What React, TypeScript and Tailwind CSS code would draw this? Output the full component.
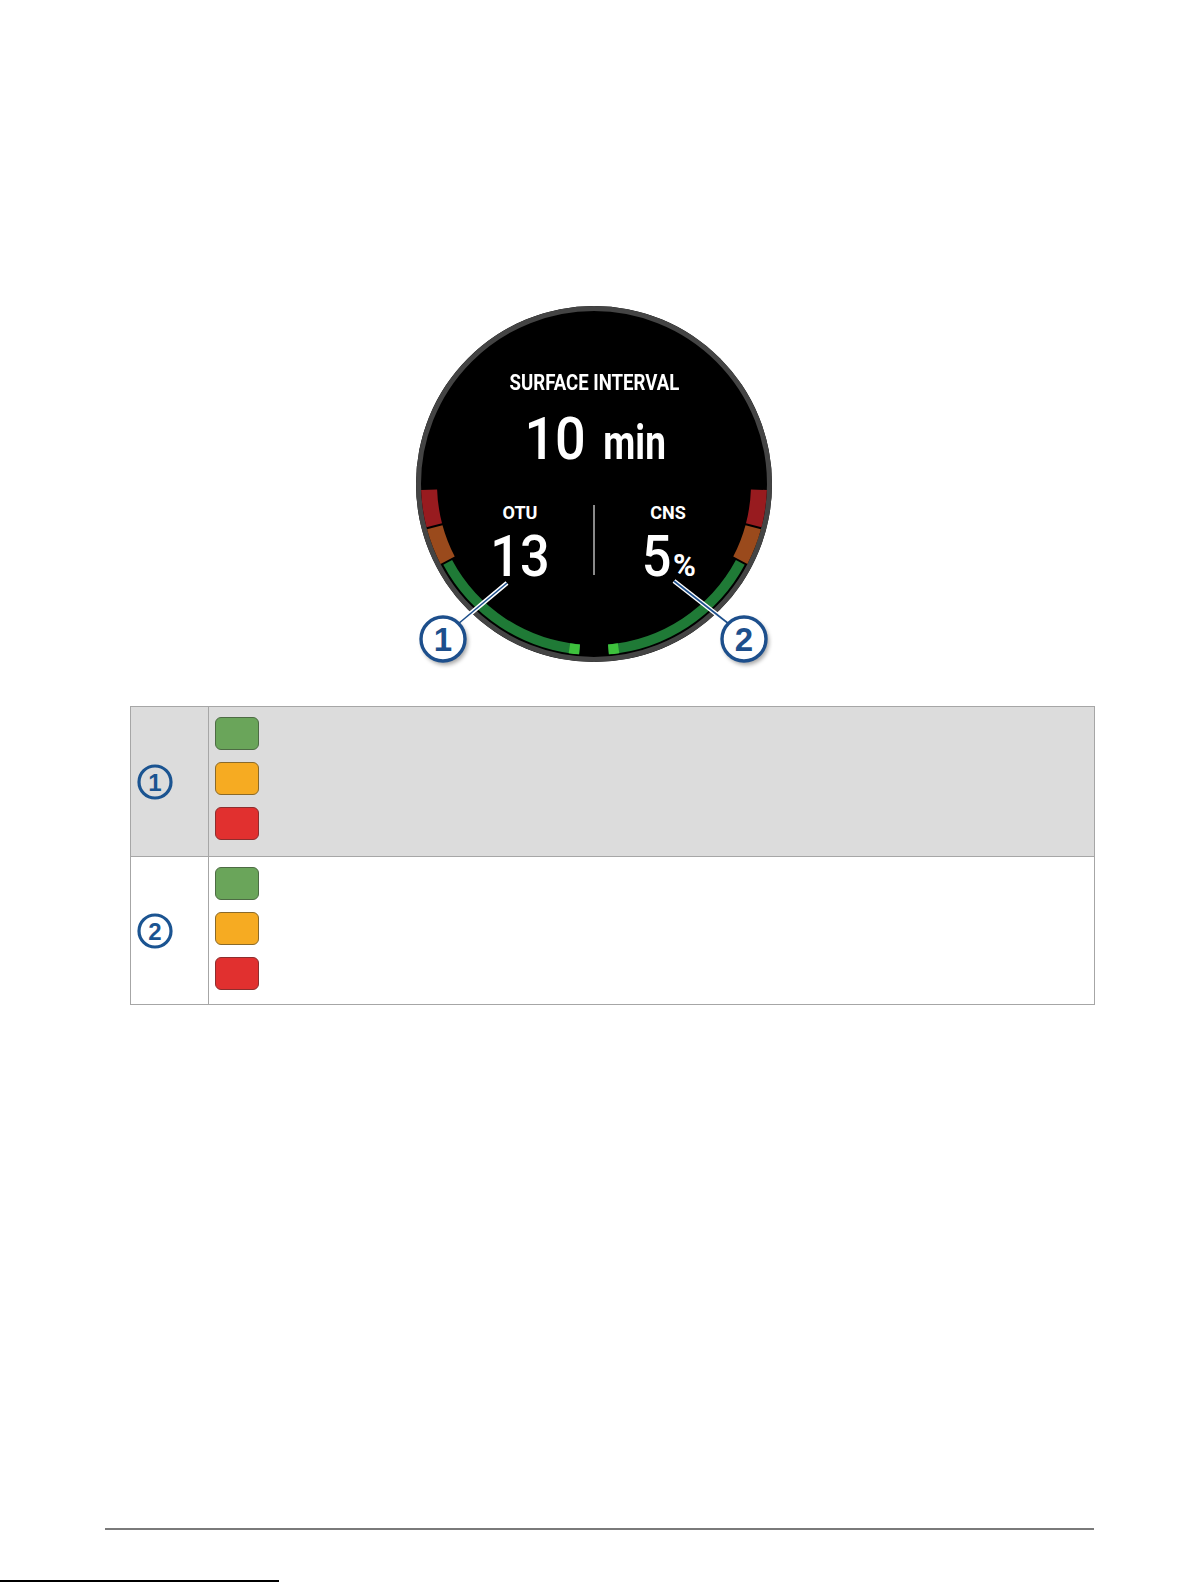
import React from "react";

const C = 178;

function pt(r: number, a: number) {
  const t = (a * Math.PI) / 180;
  return `${(C + r * Math.cos(t)).toFixed(2)} ${(C + r * Math.sin(t)).toFixed(2)}`;
}

function arc(r: number, a1: number, a2: number) {
  return `M ${pt(r, a1)} A ${r} ${r} 0 0 1 ${pt(r, a2)}`;
}

// gauge segments, angles in degrees (0 = right, clockwise)
const segments = [
  { r: 165, w: 16, a1: 165.5, a2: 178, color: "#981b1f" },
  { r: 165, w: 16, a1: 152.5, a2: 164.8, color: "#9a4a1c" },
  { r: 166, w: 10, a1: 95, a2: 151.8, color: "#1f7a36" },
  { r: 166, w: 10, a1: 95, a2: 98.5, color: "#3ec13d" },
  { r: 165, w: 16, a1: 2, a2: 14.5, color: "#981b1f" },
  { r: 165, w: 16, a1: 15.2, a2: 27.5, color: "#9a4a1c" },
  { r: 166, w: 10, a1: 28.2, a2: 85, color: "#1f7a36" },
  { r: 166, w: 10, a1: 81.5, a2: 85, color: "#3ec13d" },
];

function Callout({ x, y, n }: { x: number; y: number; n: string }) {
  return (
    <g>
      <circle cx={x + 2} cy={y + 3} r={23} fill="#000" opacity={0.35} filter="url(#soft)" />
      <circle cx={x} cy={y} r={22} fill="#fff" stroke="#1d4f8c" strokeWidth={3.4} />
      <text
        x={x}
        y={y + 12}
        textAnchor="middle"
        fontFamily="'Liberation Sans', Arial, sans-serif"
        fontWeight={700}
        fontSize={33}
        fill="#1d4f8c"
      >
        {n}
      </text>
    </g>
  );
}

function Leader({ x1, y1, x2, y2 }: { x1: number; y1: number; x2: number; y2: number }) {
  return (
    <g>
      <line x1={x1} y1={y1} x2={x2} y2={y2} stroke="#ffffff" strokeWidth={4.5} />
      <line x1={x1} y1={y1} x2={x2} y2={y2} stroke="#1d4f8c" strokeWidth={1.6} />
    </g>
  );
}

function Watch() {
  return (
    <div className="relative w-[356px] h-[356px] rounded-full bg-black">
      <svg className="absolute inset-0 overflow-visible" width="356" height="356" viewBox="0 0 356 356">
        <defs>
          <filter id="soft" x="-50%" y="-50%" width="200%" height="200%">
            <feGaussianBlur stdDeviation="2" />
          </filter>
        </defs>
        <circle cx={C} cy={C} r={175.5} fill="none" stroke="#444444" strokeWidth={5} />
        {segments.map((s, i) => (
          <path key={i} d={arc(s.r, s.a1, s.a2)} fill="none" stroke={s.color} strokeWidth={s.w} />
        ))}
        <Leader x1={91} y1={277} x2={42} y2={318} />
        <Leader x1={258} y1={275} x2={313} y2={318} />
        <Callout x={27} y={333} n="1" />
        <Callout x={328} y={333} n="2" />
      </svg>

      <div className="relative flex flex-col items-center pt-[66px] text-white font-['Roboto',sans-serif]">
        <div className="inline-block font-bold text-[22px] leading-none whitespace-nowrap scale-x-[0.845]">
          SURFACE INTERVAL
        </div>
        <div className="mt-[15px] pl-[8px] flex items-baseline text-[60px] leading-none whitespace-nowrap">
          <span className="inline-block font-medium scale-x-[0.9]">10</span>
          <span className="inline-block ml-[5px] font-bold text-[48px] scale-x-[0.77]">min</span>
        </div>
        <div className="mt-[35px] flex justify-center">
          <div className="w-[146px] flex flex-col items-center">
            <div className="inline-block font-bold text-[18px] leading-none">OTU</div>
            <div className="inline-block mt-[5px] font-medium text-[58px] leading-none scale-x-[0.9]">13</div>
          </div>
          <div className="mt-[1px] w-[2px] h-[70px] bg-[#8a8a8a]" />
          <div className="w-[146px] flex flex-col items-center">
            <div className="inline-block font-bold text-[18px] leading-none">CNS</div>
            <div className="mt-[5px] flex items-baseline text-[58px] leading-none whitespace-nowrap">
              <span className="inline-block font-medium scale-x-[0.9]">5</span>
              <span className="inline-block font-bold text-[31px]">%</span>
            </div>
          </div>
        </div>
      </div>
    </div>
  );
}

function Num({ n }: { n: string }) {
  return (
    <svg width="36" height="36" viewBox="0 0 36 36">
      <circle cx="18" cy="18" r="16" fill="none" stroke="#1b5491" strokeWidth="3.2" />
      <text
        x="18"
        y="26.5"
        textAnchor="middle"
        fontFamily="'Liberation Sans', Arial, sans-serif"
        fontWeight={700}
        fontSize="24"
        fill="#1b5491"
      >
        {n}
      </text>
    </svg>
  );
}

function Swatch({ color, border }: { color: string; border: string }) {
  return <div className={`w-[44px] h-[33px] rounded-[6px] border ${color} ${border}`} />;
}

function Swatches() {
  return (
    <div className="flex flex-col gap-[12px] pt-[10px] pl-[6px]">
      <Swatch color="bg-[#6aa55a]" border="border-[#4d6b44]" />
      <Swatch color="bg-[#f6ab22]" border="border-[#8a6a2a]" />
      <Swatch color="bg-[#e1302f]" border="border-[#8c2e2e]" />
    </div>
  );
}

export default function App() {
  return (
    <div className="w-[1197px] h-[1583px] bg-white overflow-hidden font-['Liberation_Sans',Arial,sans-serif]">
      <div className="pt-[306px] pl-[416px]">
        <Watch />
      </div>

      <div className="mt-[44px] ml-[130px] w-[965px] border border-[#a6a6a6]">
        <div className="flex h-[149px] bg-[#dcdcdc]">
          <div className="w-[78px] flex items-center pl-[6px] border-r border-[#a6a6a6]">
            <Num n="1" />
          </div>
          <Swatches />
        </div>
        <div className="flex h-[148px] border-t border-[#a6a6a6]">
          <div className="w-[78px] flex items-center pl-[6px] border-r border-[#a6a6a6]">
            <Num n="2" />
          </div>
          <Swatches />
        </div>
      </div>

      <div className="mt-[523px] ml-[105px] w-[989px] h-[2px] bg-[#7a7a7a]" />
      <div className="mt-[50px] w-[279px] h-[2px] bg-black" />
    </div>
  );
}
